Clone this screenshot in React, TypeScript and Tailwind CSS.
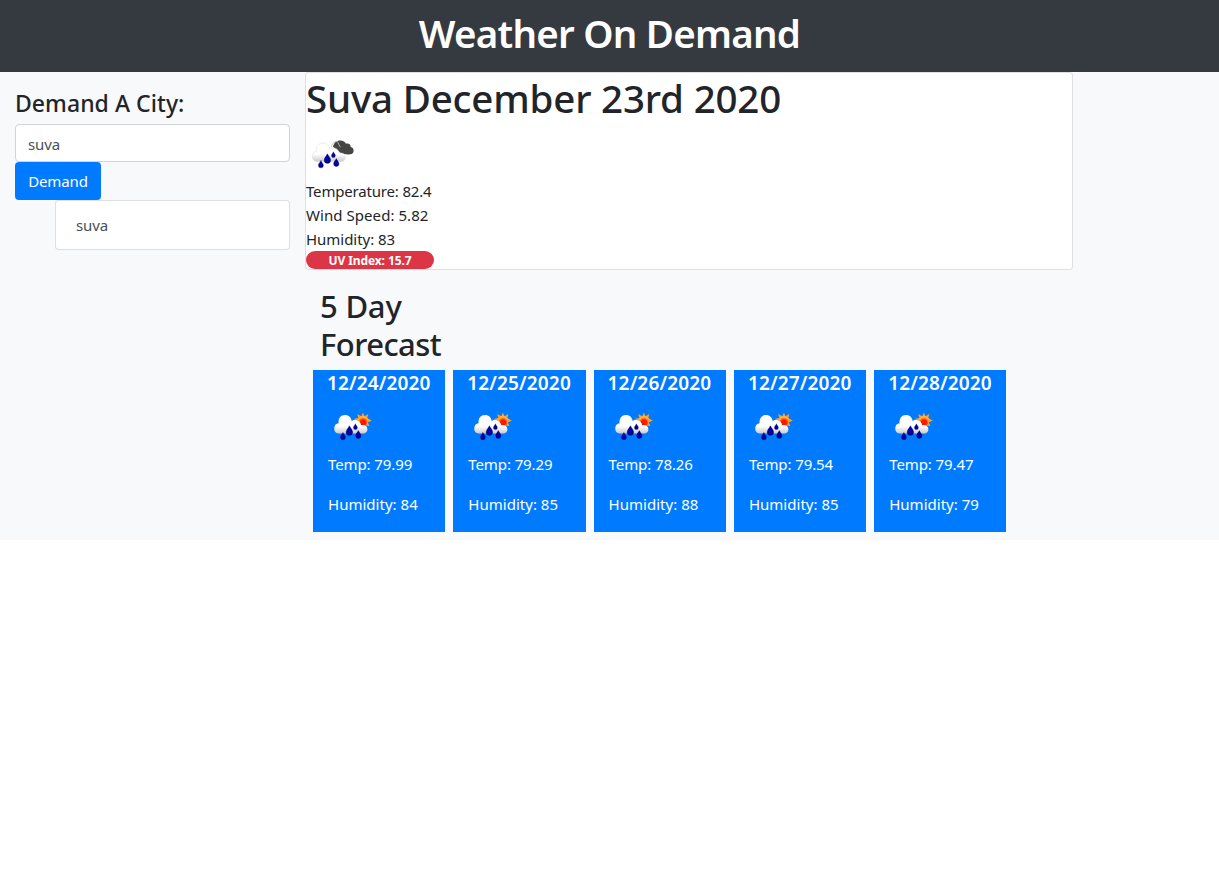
import React, { useState } from "react";

const days = [
  { date: "12/24/2020", temp: "79.99", humidity: "84" },
  { date: "12/25/2020", temp: "79.29", humidity: "85" },
  { date: "12/26/2020", temp: "78.26", humidity: "88" },
  { date: "12/27/2020", temp: "79.54", humidity: "85" },
  { date: "12/28/2020", temp: "79.47", humidity: "79" },
];

function Drop({ x, y, s = 1 }: { x: number; y: number; s?: number }) {
  return (
    <path
      transform={`translate(${x} ${y}) scale(${s})`}
      d="M0 0C.6 1.8 2.8 3.5 2.8 5.6A2.8 2.7 0 0 1-2.8 5.6C-2.8 3.5-.6 1.8 0 0Z"
      fill="url(#drop)"
      stroke="#00005c"
      strokeWidth=".4"
    />
  );
}

function Defs() {
  return (
    <defs>
      <linearGradient id="cloud" x1="0" y1="0" x2="0" y2="1">
        <stop offset=".6" stopColor="#ffffff" />
        <stop offset="1" stopColor="#cacaca" />
      </linearGradient>
      <radialGradient id="drop">
        <stop offset="0" stopColor="#0000d0" />
        <stop offset="1" stopColor="#000078" />
      </radialGradient>
      <radialGradient id="sun" cx=".5" cy=".65">
        <stop offset=".5" stopColor="#ff1800" />
        <stop offset="1" stopColor="#ffb040" />
      </radialGradient>
    </defs>
  );
}

function RainCloud({ outline }: { outline: string }) {
  return (
    <g>
      <path
        d="M10.5 32.6C7.8 32.2 6.2 30.2 6.2 27.4C6.2 24.6 8 22.6 10.6 22.3C10 17.4 12.8 14 17 14C20.8 14 23.4 16.6 23.7 20.2C25 19 26.5 18.7 28 18.9C31 19.3 32.8 21.6 33.2 24.3C36.8 23.5 39.4 25.4 39.4 28.3C39.4 30.8 37.8 32.6 35 32.6Z"
        fill="url(#cloud)"
        stroke={outline}
        strokeWidth=".5"
      />
      <Drop x={21.4} y={24.8} s={1.15} />
      <Drop x={27.4} y={22.8} s={0.7} />
      <Drop x={14.9} y={31.4} s={0.9} />
      <Drop x={30.3} y={29.6} s={0.94} />
    </g>
  );
}

function StormIcon() {
  return (
    <svg width="50" height="50" viewBox="0 0 50 50" className="block">
      <Defs />
      <path d="M27 18C28 13.5 30.5 11.5 34.3 11.5C37.3 11.5 39.2 12.8 40 14.8C43 14 44.6 15.6 44.7 18C46.7 18.2 47.6 19.8 47.6 21.7C47.6 24 46.2 25.4 43.8 25.2C41.5 25.8 38 25 35 24.2Z" fill="#454545" />
      <path d="M25.3 18.2C26 14.2 28.5 12.3 31.3 12.4C32.8 15 33.2 16.6 34.5 18.2" fill="none" stroke="#bdbdbd" strokeWidth=".9" />
      <RainCloud outline="#dadada" />
    </svg>
  );
}

function SunRainIcon() {
  return (
    <svg width="50" height="50" viewBox="0 0 50 50" className="block">
      <path d="M34.9 11.4L36.5 15.2L40.3 12.9L39.3 17.1L43.9 19.8L39.8 21.2L41.4 24.9L37.3 24.6L35.6 28.6L32 25L29 22L29.8 19.8L26.2 17.8L30.4 17L29.2 13L33.3 15.2Z" fill="#ffa21a" />
      <circle cx="35" cy="20" r="5.2" fill="url(#sun)" />
      <RainCloud outline="none" />
    </svg>
  );
}

export default function App() {
  const [city, setCity] = useState("suva");
  return (
    <div className="min-h-[873px] bg-white font-['Noto_Sans',sans-serif] text-[15px] tracking-[-0.1px] text-[#212529]">
      <header className="h-[72px] bg-[#343a40] pt-[9px] text-center">
        <h1 className="text-[38.5px] font-semibold leading-[48px] tracking-[-0.75px] text-white">Weather On Demand</h1>
      </header>
      <main className="flex h-[468px] bg-[#f8f9fa]">
        <aside className="w-[305px] shrink-0 px-[15px] pt-[17px]">
          <h4 className="whitespace-nowrap text-[23px] font-medium leading-[29px] tracking-[0.05px]">Demand A City:</h4>
          <input
            value={city}
            onChange={(e) => setCity(e.target.value)}
            className="mt-1.5 block h-[38px] w-full rounded border border-[#ced4da] bg-white px-3 pt-0.5 text-[#495057] outline-none"
          />
          <button className="block h-[38px] w-[86px] rounded bg-[#007bff] pt-px text-white">Demand</button>
          <ul className="pl-10">
            <li className="h-[50px] rounded border border-black/[0.125] bg-white px-5 py-3 leading-6 text-[#495057]">suva</li>
          </ul>
        </aside>
        <div>
          <section className="h-[198px] w-[768px] rounded border border-black/[0.125] bg-white">
            <h1 className="mb-2 whitespace-nowrap text-[38.5px] font-medium leading-[50px] tracking-[-0.18px]">Suva December 23rd 2020</h1>
            <div className="-mt-0.5 h-[50px]"><StormIcon /></div>
            <p className="leading-6 tracking-[-0.18px]">Temperature: 82.4</p>
            <p className="leading-6 tracking-[0.06px]">Wind Speed: 5.82</p>
            <p className="leading-6 tracking-[-0.03px]">Humidity: 83</p>
            <div className="h-[18px] w-32 rounded-full bg-[#dc3545] pt-px text-center text-xs font-bold leading-[18px] tracking-[-0.1px] text-white">UV Index: 15.7</div>
          </section>
          <h2 className="-mt-px ml-[15px] w-[140px] pt-[18px] text-[31px] font-medium leading-[38px] tracking-[-0.55px]">
            <span className="tracking-[-0.2px]">5 Day</span> Forecast
          </h2>
          <div className="ml-2 mt-[7px] flex gap-2">
            {days.map((d) => (
              <article key={d.date} className="h-[162px] w-[132.3px] shrink-0 bg-[#007bff] pl-[15px] text-white">
                <h5 className="-ml-px whitespace-nowrap text-[19px] font-semibold leading-[26px] tracking-[0.15px]">{d.date}</h5>
                <div className="mt-[5px] h-[50px]"><SunRainIcon /></div>
                <p className="mb-4 mt-px whitespace-nowrap leading-6">Temp: {d.temp}</p>
                <p className="whitespace-nowrap leading-6 tracking-[0.02px]">Humidity: {d.humidity}</p>
              </article>
            ))}
          </div>
        </div>
      </main>
    </div>
  );
}
